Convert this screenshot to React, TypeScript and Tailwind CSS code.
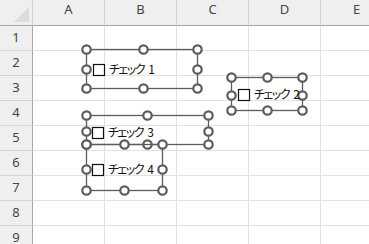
import React from 'react'

const cols = ['A', 'B', 'C', 'D', 'E']
const rows = [1, 2, 3, 4, 5, 6, 7, 8, 9]

type Frame = { xs: [number, number, number]; ys: [number, number, number] }

// selection frames of the four form controls (handle centres, page pixels)
const frames: Frame[] = [
  { xs: [86, 143, 197], ys: [49, 69, 88] },
  { xs: [231, 267, 302], ys: [77, 95, 110] },
  { xs: [86, 147, 208], ys: [115, 131, 144] },
  { xs: [86, 124, 162], ys: [144, 169, 190] },
]

const checks = [
  { box: [93, 64], label: 'チェック 1', cls: 'left-[109px] top-[61px]' },
  { box: [238, 89], label: 'チェック 2', cls: 'left-[254px] top-[86px]' },
  { box: [92, 127], label: 'チェック 3', cls: 'left-[108px] top-[124px]' },
  { box: [92, 164], label: 'チェック 4', cls: 'left-[108px] top-[161px]' },
]

function Handles({ xs, ys }: Frame) {
  const pts: [number, number][] = []
  ys.forEach((y, j) =>
    xs.forEach((x, i) => {
      if (i === 1 && j === 1) return
      pts.push([x, y])
    }),
  )
  return (
    <g>
      <rect
        x={xs[0] + 0.5}
        y={ys[0] + 0.5}
        width={xs[2] - xs[0]}
        height={ys[2] - ys[0]}
        fill="none"
        stroke="#5c5c5c"
        strokeWidth={1.3}
      />
      {pts.map(([x, y], k) => (
        <circle key={k} cx={x + 0.5} cy={y + 0.5} r={4.2} fill="#fff" stroke="#5c5c5c" strokeWidth={2.2} />
      ))}
    </g>
  )
}

export default function App() {
  return (
    <div className="relative w-[369px] h-[244px] overflow-hidden bg-white font-['Noto_Sans',sans-serif] text-[13px] text-[#444]">
      {/* ── Column headers ─────────────────────────────── */}
      <div className="flex h-[26px] bg-[#efefef]">
        <div className="relative w-[33px] shrink-0 border-r border-b border-r-[#d4d4d4] border-b-[#a6a6a6]">
          <svg className="absolute left-0 top-0" width="33" height="25">
            <polygon points="14,22 29,22 29,7" fill="#dcdcdc" />
          </svg>
        </div>
        {cols.map((c) => (
          <div
            key={c}
            className="w-[72px] shrink-0 border-r border-b border-r-[#d4d4d4] border-b-[#a6a6a6] text-center leading-[18px]"
          >
            {c}
          </div>
        ))}
      </div>

      {/* ── Rows ───────────────────────────────────────── */}
      {rows.map((r) => (
        <div key={r} className="flex h-[25px]">
          <div className="w-[33px] shrink-0 bg-[#efefef] border-r border-b border-r-[#a6a6a6] border-b-[#d4d4d4] flex items-center justify-center">
            {r}
          </div>
          {cols.map((c) => (
            <div key={c} className="w-[72px] shrink-0 border-r border-b border-[#e1e1e1]" />
          ))}
        </div>
      ))}

      {/* ── Form controls overlay ──────────────────────── */}
      <svg className="absolute left-0 top-0 pointer-events-none" width="369" height="244">
        {frames.map((f, i) => (
          <Handles key={i} {...f} />
        ))}
        {checks.map((c, i) => (
          <rect key={i} x={c.box[0] + 0.5} y={c.box[1] + 0.5} width={11} height={11} fill="#fff" stroke="#111" strokeWidth={1.2} />
        ))}
      </svg>
      {checks.map((c) => (
        <span
          key={c.label}
          className={`absolute ${c.cls} text-[12px] leading-[16px] text-[#111] font-['Noto_Sans_CJK_JP',sans-serif] [font-feature-settings:'palt'] tracking-[-1.5px] [word-spacing:3px]`}
        >
          {c.label}
        </span>
      ))}
    </div>
  )
}
